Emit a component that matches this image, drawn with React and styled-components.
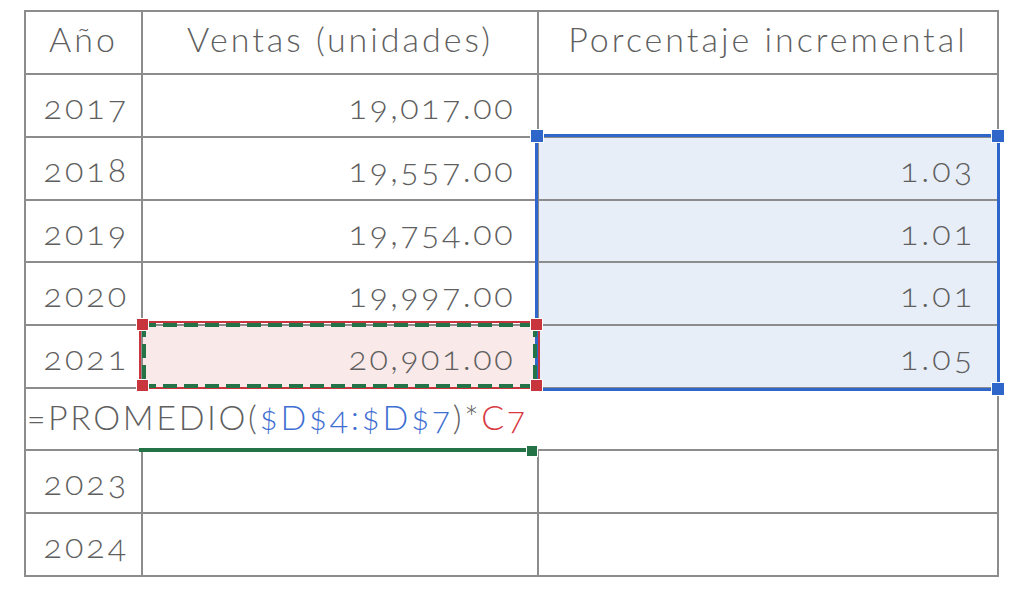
import React from 'react';
import styled, { createGlobalStyle } from 'styled-components';

const lineGray = '#8c8c8c';
const textGray = '#5f5f5f';
const selBlue = '#2f66c9';
const refRed = '#c8353d';
const cutGreen = '#237346';

const GlobalStyle = createGlobalStyle`
  html, body {
    margin: 0;
    background: #ffffff;
  }
  body {
    font-family: Lato, "Liberation Sans", sans-serif;
  }
`;

const Page = styled.div`
  padding: 10px 0 0 24px;
`;

const Sheet = styled.div`
  position: relative;
  display: grid;
  grid-template-columns: 115px 394px 458px;
  grid-template-rows: 61px 61px 61px 60px 61px 61px 60px 61px 61px;
  gap: 2px;
  padding: 2px;
  width: max-content;
  background: ${lineGray};
`;

const Cell = styled.div`
  display: flex;
  align-items: center;
  justify-content: ${p => p.$align || 'flex-end'};
  padding: ${p => p.$pad || '0 22px 0 0'};
  background: ${p => p.$fill || '#ffffff'};
  color: ${textGray};
  font-size: 34px;
  font-weight: 300;
  letter-spacing: ${p => p.$track || 3}px;
  font-variant-numeric: oldstyle-nums;
  white-space: nowrap;
  overflow: hidden;
`;

const HeadCell = styled(Cell)`
  justify-content: center;
  padding: 0 0 8px 0;
`;

const YearCell = styled(Cell)`
  padding: 0 12px 0 0;
`;

const FormulaCell = styled(Cell)`
  grid-column: 1 / -1;
  justify-content: flex-start;
  padding: 0 0 6px 1px;
  letter-spacing: 2.6px;
`;

const Ref = styled.span`
  color: ${p => p.$color};
`;

// selection frames drawn over the grid
const Frame = styled.div`
  position: absolute;
  box-sizing: border-box;
  left: ${p => p.$x}px;
  top: ${p => p.$y}px;
  width: ${p => p.$w}px;
  height: ${p => p.$h}px;
  border: ${p => p.$border || 'none'};
`;

const Marquee = styled(Frame)`
  background:
    repeating-linear-gradient(90deg, ${cutGreen} 0 14px, transparent 14px 21px) left top / 100% 4px no-repeat,
    repeating-linear-gradient(90deg, ${cutGreen} 0 14px, transparent 14px 21px) left bottom / 100% 4px no-repeat,
    repeating-linear-gradient(180deg, ${cutGreen} 0 14px, transparent 14px 21px) left top / 4px 100% no-repeat,
    repeating-linear-gradient(180deg, ${cutGreen} 0 14px, transparent 14px 21px) right top / 4px 100% no-repeat;
`;

const Corner = styled.div`
  position: absolute;
  width: ${p => p.$size}px;
  height: ${p => p.$size}px;
  background: ${p => p.$color};
  box-shadow: 0 0 0 1px #ffffff;
  ${p => (p.$at.includes('t') ? 'top' : 'bottom')}: ${p => p.$off}px;
  ${p => (p.$at.includes('l') ? 'left' : 'right')}: ${p => p.$off}px;
`;

const ActiveEdge = styled(Frame)`
  background: ${cutGreen};
`;

const rows = [
  { year: '2017', sales: '19,017.00', pct: '' },
  { year: '2018', sales: '19,557.00', pct: '1.03', picked: true },
  { year: '2019', sales: '19,754.00', pct: '1.01', picked: true },
  { year: '2020', sales: '19,997.00', pct: '1.01', picked: true },
  { year: '2021', sales: '20,901.00', pct: '1.05', picked: true, cut: true },
];

export default function App() {
  return (
    <Page>
      <GlobalStyle />
      <Sheet>
        <HeadCell>Año</HeadCell>
        <HeadCell>Ventas (unidades)</HeadCell>
        <HeadCell>Porcentaje incremental</HeadCell>

        {rows.map(r => (
          <React.Fragment key={r.year}>
            <YearCell>{r.year}</YearCell>
            <Cell $fill={r.cut ? '#f9e9e8' : undefined} $track={2.5}>{r.sales}</Cell>
            <Cell $fill={r.picked ? '#e8eef8' : undefined}>{r.pct}</Cell>
          </React.Fragment>
        ))}

        <FormulaCell>
          =PROMEDIO(<Ref $color="#3f6fd2">$D$4:$D$7</Ref>)*<Ref $color="#d8393f">C7</Ref>
        </FormulaCell>

        {['2023', '2024'].map(y => (
          <React.Fragment key={y}>
            <YearCell>{y}</YearCell>
            <Cell />
            <Cell />
          </React.Fragment>
        ))}

        {/* D4:D7 reference range */}
        <Frame $x={511} $y={124} $w={465} $h={257} $border={`3px solid ${selBlue}`}>
          <Corner $at="tl" $off={-7} $size={12} $color={selBlue} />
          <Corner $at="tr" $off={-7} $size={12} $color={selBlue} />
          <Corner $at="br" $off={-7} $size={12} $color={selBlue} />
        </Frame>

        {/* C7 reference + copy marquee */}
        <Frame $x={115} $y={311} $w={401} $h={68} $border={`2px solid ${refRed}`}>
          <Marquee $x={1} $y={0} $w={395} $h={65} />
          <Corner $at="tl" $off={-4} $size={11} $color={refRed} />
          <Corner $at="tr" $off={-4} $size={11} $color={refRed} />
          <Corner $at="bl" $off={-4} $size={11} $color={refRed} />
          <Corner $at="br" $off={-4} $size={11} $color={refRed} />
        </Frame>

        {/* active cell edge under the formula */}
        <ActiveEdge $x={115} $y={438} $w={394} $h={4}>
          <Corner $at="br" $off={-4} $size={10} $color={cutGreen} />
        </ActiveEdge>
      </Sheet>
    </Page>
  );
}
